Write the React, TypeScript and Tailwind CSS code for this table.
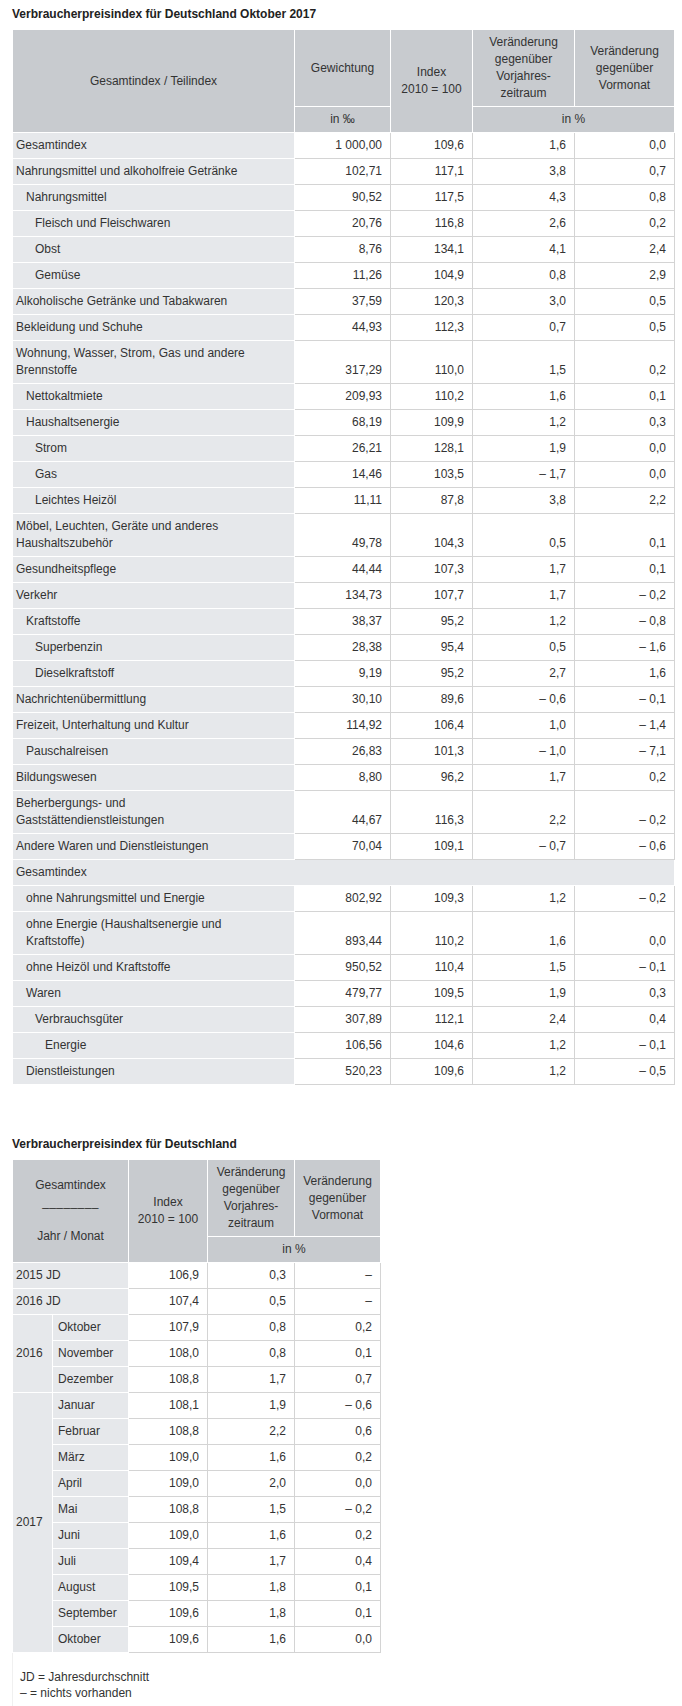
import React from 'react';

type Row = {
  label: React.ReactNode;
  level: number;
  values?: [string, string, string, string];
  span?: boolean;
};

const rows: Row[] = [
  { label: 'Gesamtindex', level: 0, values: ['1 000,00', '109,6', '1,6', '0,0'] },
  { label: 'Nahrungsmittel und alkoholfreie Getränke', level: 0, values: ['102,71', '117,1', '3,8', '0,7'] },
  { label: 'Nahrungsmittel', level: 1, values: ['90,52', '117,5', '4,3', '0,8'] },
  { label: 'Fleisch und Fleischwaren', level: 2, values: ['20,76', '116,8', '2,6', '0,2'] },
  { label: 'Obst', level: 2, values: ['8,76', '134,1', '4,1', '2,4'] },
  { label: 'Gemüse', level: 2, values: ['11,26', '104,9', '0,8', '2,9'] },
  { label: 'Alkoholische Getränke und Tabakwaren', level: 0, values: ['37,59', '120,3', '3,0', '0,5'] },
  { label: 'Bekleidung und Schuhe', level: 0, values: ['44,93', '112,3', '0,7', '0,5'] },
  {
    label: (
      <>
        Wohnung, Wasser, Strom, Gas und andere
        <br />
        Brennstoffe
      </>
    ),
    level: 0,
    values: ['317,29', '110,0', '1,5', '0,2'],
  },
  { label: 'Nettokaltmiete', level: 1, values: ['209,93', '110,2', '1,6', '0,1'] },
  { label: 'Haushaltsenergie', level: 1, values: ['68,19', '109,9', '1,2', '0,3'] },
  { label: 'Strom', level: 2, values: ['26,21', '128,1', '1,9', '0,0'] },
  { label: 'Gas', level: 2, values: ['14,46', '103,5', '– 1,7', '0,0'] },
  { label: 'Leichtes Heizöl', level: 2, values: ['11,11', '87,8', '3,8', '2,2'] },
  {
    label: (
      <>
        Möbel, Leuchten, Geräte und anderes
        <br />
        Haushaltszubehör
      </>
    ),
    level: 0,
    values: ['49,78', '104,3', '0,5', '0,1'],
  },
  { label: 'Gesundheitspflege', level: 0, values: ['44,44', '107,3', '1,7', '0,1'] },
  { label: 'Verkehr', level: 0, values: ['134,73', '107,7', '1,7', '– 0,2'] },
  { label: 'Kraftstoffe', level: 1, values: ['38,37', '95,2', '1,2', '– 0,8'] },
  { label: 'Superbenzin', level: 2, values: ['28,38', '95,4', '0,5', '– 1,6'] },
  { label: 'Dieselkraftstoff', level: 2, values: ['9,19', '95,2', '2,7', '1,6'] },
  { label: 'Nachrichtenübermittlung', level: 0, values: ['30,10', '89,6', '– 0,6', '– 0,1'] },
  { label: 'Freizeit, Unterhaltung und Kultur', level: 0, values: ['114,92', '106,4', '1,0', '– 1,4'] },
  { label: 'Pauschalreisen', level: 1, values: ['26,83', '101,3', '– 1,0', '– 7,1'] },
  { label: 'Bildungswesen', level: 0, values: ['8,80', '96,2', '1,7', '0,2'] },
  {
    label: (
      <>
        Beherbergungs- und
        <br />
        Gaststättendienstleistungen
      </>
    ),
    level: 0,
    values: ['44,67', '116,3', '2,2', '– 0,2'],
  },
  { label: 'Andere Waren und Dienstleistungen', level: 0, values: ['70,04', '109,1', '– 0,7', '– 0,6'] },
  { label: 'Gesamtindex', level: 0, span: true },
  { label: 'ohne Nahrungsmittel und Energie', level: 1, values: ['802,92', '109,3', '1,2', '– 0,2'] },
  {
    label: (
      <>
        ohne Energie (Haushaltsenergie und
        <br />
        Kraftstoffe)
      </>
    ),
    level: 1,
    values: ['893,44', '110,2', '1,6', '0,0'],
  },
  { label: 'ohne Heizöl und Kraftstoffe', level: 1, values: ['950,52', '110,4', '1,5', '– 0,1'] },
  { label: 'Waren', level: 1, values: ['479,77', '109,5', '1,9', '0,3'] },
  { label: 'Verbrauchsgüter', level: 2, values: ['307,89', '112,1', '2,4', '0,4'] },
  { label: 'Energie', level: 3, values: ['106,56', '104,6', '1,2', '– 0,1'] },
  { label: 'Dienstleistungen', level: 1, values: ['520,23', '109,6', '1,2', '– 0,5'] },
];

const indent = ['pl-[3px]', 'pl-[13px]', 'pl-[22px]', 'pl-[32px]'];

type MonthRow = { month: string; idx: string; vj: string; vm: string };

const months2016: MonthRow[] = [
  { month: 'Oktober', idx: '107,9', vj: '0,8', vm: '0,2' },
  { month: 'November', idx: '108,0', vj: '0,8', vm: '0,1' },
  { month: 'Dezember', idx: '108,8', vj: '1,7', vm: '0,7' },
];

const months2017: MonthRow[] = [
  { month: 'Januar', idx: '108,1', vj: '1,9', vm: '– 0,6' },
  { month: 'Februar', idx: '108,8', vj: '2,2', vm: '0,6' },
  { month: 'März', idx: '109,0', vj: '1,6', vm: '0,2' },
  { month: 'April', idx: '109,0', vj: '2,0', vm: '0,0' },
  { month: 'Mai', idx: '108,8', vj: '1,5', vm: '– 0,2' },
  { month: 'Juni', idx: '109,0', vj: '1,6', vm: '0,2' },
  { month: 'Juli', idx: '109,4', vj: '1,7', vm: '0,4' },
  { month: 'August', idx: '109,5', vj: '1,8', vm: '0,1' },
  { month: 'September', idx: '109,6', vj: '1,8', vm: '0,1' },
  { month: 'Oktober', idx: '109,6', vj: '1,6', vm: '0,0' },
];

const th = 'border border-white bg-[#c8cbcf] px-1 py-1 text-center align-middle font-normal';
const label = 'border border-white bg-[#e6e8eb] py-1 pr-1 text-left align-top';
const num = 'border border-[#d4d4d4] bg-white py-1 pr-[8px] text-right align-bottom';

export default function App() {
  return (
    <div
      className="min-h-[1706px] bg-white pl-[12px] pt-[6px] text-[12px] leading-[17px] text-[#333]"
      style={{ fontFamily: '"Liberation Sans", Arial, sans-serif' }}
    >
      <h2 className="mb-[6px] text-[12px] font-bold text-[#222]">
        Verbraucherpreisindex für Deutschland Oktober 2017
      </h2>
      <table className="w-[662px] table-fixed border-collapse">
        <colgroup>
          <col className="w-[282px]" />
          <col className="w-[96px]" />
          <col className="w-[82px]" />
          <col className="w-[102px]" />
          <col className="w-[100px]" />
        </colgroup>
        <thead>
          <tr>
            <th rowSpan={2} className={th}>
              Gesamtindex / Teilindex
            </th>
            <th className={th}>Gewichtung</th>
            <th rowSpan={2} className={th}>
              Index
              <br />
              2010 = 100
            </th>
            <th className={th}>
              Veränderung
              <br />
              gegenüber
              <br />
              Vorjahres-
              <br />
              zeitraum
            </th>
            <th className={th}>
              Veränderung
              <br />
              gegenüber
              <br />
              Vormonat
            </th>
          </tr>
          <tr>
            <th className={th}>in ‰</th>
            <th colSpan={2} className={th}>
              in %
            </th>
          </tr>
        </thead>
        <tbody>
          {rows.map((r, i) =>
            r.span ? (
              <tr key={i}>
                <td colSpan={5} className={`${label} ${indent[r.level]}`}>
                  {r.label}
                </td>
              </tr>
            ) : (
              <tr key={i}>
                <td className={`${label} ${indent[r.level]}`}>{r.label}</td>
                {r.values!.map((v, j) => (
                  <td key={j} className={num}>
                    {v}
                  </td>
                ))}
              </tr>
            )
          )}
        </tbody>
      </table>

      <h2 className="mb-[6px] mt-[51px] text-[12px] font-bold text-[#222]">
        Verbraucherpreisindex für Deutschland
      </h2>
      <table className="w-[368px] table-fixed border-collapse">
        <colgroup>
          <col className="w-[40px]" />
          <col className="w-[76px]" />
          <col className="w-[79px]" />
          <col className="w-[87px]" />
          <col className="w-[86px]" />
        </colgroup>
        <thead>
          <tr>
            <th rowSpan={2} colSpan={2} className={th}>
              Gesamtindex
              <br />
              <span className="tracking-[0.4px]">________</span>
              <br />
              <br />
              Jahr / Monat
            </th>
            <th rowSpan={2} className={th}>
              Index
              <br />
              2010 = 100
            </th>
            <th className={th}>
              Veränderung
              <br />
              gegenüber
              <br />
              Vorjahres-
              <br />
              zeitraum
            </th>
            <th className={th}>
              Veränderung
              <br />
              gegenüber
              <br />
              Vormonat
            </th>
          </tr>
          <tr>
            <th colSpan={2} className={th}>
              in %
            </th>
          </tr>
        </thead>
        <tbody>
          <tr>
            <td colSpan={2} className={`${label} pl-[3px]`}>
              2015 JD
            </td>
            <td className={num}>106,9</td>
            <td className={num}>0,3</td>
            <td className={num}>–</td>
          </tr>
          <tr>
            <td colSpan={2} className={`${label} pl-[3px]`}>
              2016 JD
            </td>
            <td className={num}>107,4</td>
            <td className={num}>0,5</td>
            <td className={num}>–</td>
          </tr>
          {months2016.map((m, i) => (
            <tr key={'a' + i}>
              {i === 0 && (
                <td rowSpan={3} className={`${label} !align-middle pl-[3px]`}>
                  2016
                </td>
              )}
              <td className={`${label} pl-[5px]`}>{m.month}</td>
              <td className={num}>{m.idx}</td>
              <td className={num}>{m.vj}</td>
              <td className={num}>{m.vm}</td>
            </tr>
          ))}
          {months2017.map((m, i) => (
            <tr key={'b' + i}>
              {i === 0 && (
                <td rowSpan={10} className={`${label} !align-middle pl-[3px]`}>
                  2017
                </td>
              )}
              <td className={`${label} pl-[5px]`}>{m.month}</td>
              <td className={num}>{m.idx}</td>
              <td className={num}>{m.vj}</td>
              <td className={num}>{m.vm}</td>
            </tr>
          ))}
        </tbody>
      </table>
      <div className="w-[368px] border-l border-[#f0f0f0] pb-[5px] pl-[7px] pt-[16px] leading-[16px]">
        <p>JD = Jahresdurchschnitt</p>
        <p>– = nichts vorhanden</p>
      </div>
    </div>
  );
}
